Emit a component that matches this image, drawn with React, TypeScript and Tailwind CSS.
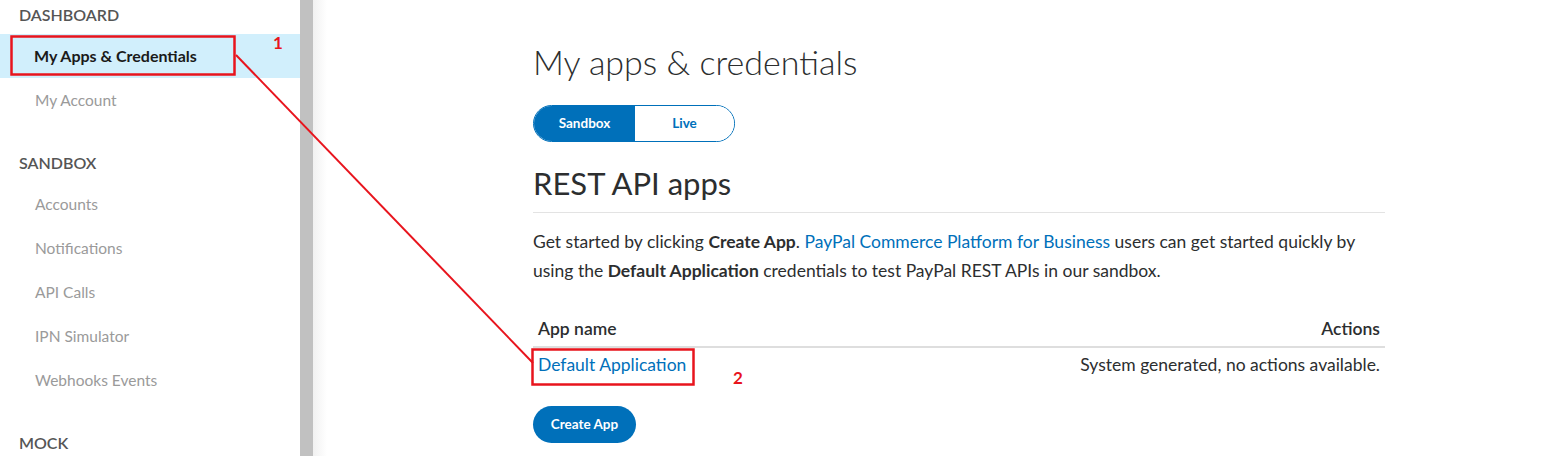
const sandboxLinks = ['Accounts', 'Notifications', 'API Calls', 'IPN Simulator', 'Webhooks Events'];

const Sidebar = () => {
  return (
    <aside className="relative flex h-full w-[300px] shrink-0 flex-col bg-white">
      <div className="pl-[19px] pt-[5px] text-[16px] font-semibold uppercase leading-[20px] text-[#555]">Dashboard</div>
      <div className="mt-[9px] flex h-[44px] items-center bg-[#d1effc] pl-[34px] text-[16px] font-bold text-[#1a1a1a]">
        My Apps &amp; Credentials
      </div>
      <div className="flex h-[45px] items-center pl-[35px] pt-[1px] text-[15.5px] text-[#9a9a9a]">My Account</div>
      <div className="mt-[30px] pl-[19px] text-[16px] font-semibold uppercase leading-[20px] text-[#555]">Sandbox</div>
      <div className="mt-[10px] flex flex-col">
        {sandboxLinks.map((link) => (
          <div key={link} className="flex h-[44px] items-center pl-[35px] text-[15.5px] text-[#9a9a9a]">
            {link}
          </div>
        ))}
      </div>
      <div className="mt-[30px] pl-[19px] text-[16px] font-semibold uppercase leading-[20px] text-[#555]">Mock</div>
    </aside>
  );
};

const App = () => {
  return (
    <div
      className="relative flex h-[456px] w-[1567px] overflow-hidden bg-white"
      style={{ fontFamily: 'Lato, "Open Sans", sans-serif' }}
    >
      <Sidebar />
      <div className="h-full w-[13px] shrink-0 bg-[#c1c1c1]" />
      <div className="h-full w-[14px] shrink-0 bg-gradient-to-r from-[#f1f1f1] to-white" />

      <main className="flex-1 pl-[206px]">
        <div className="w-[852px]">
          <h1 className="mt-[40px] text-[34px] font-light leading-[44px] text-[#2c2e2f]">My apps &amp; credentials</h1>

          <div className="mt-[21px] flex h-[37px] w-[202px] overflow-hidden rounded-full border border-[#0070ba] text-[13.5px] font-bold">
            <button className="w-[101px] bg-[#0070ba] text-white">Sandbox</button>
            <button className="flex-1 bg-white text-[#0070ba]">Live</button>
          </div>

          <h2 className="mt-[22px] text-[31px] font-normal leading-[38px] text-[#2c2e2f]">REST API apps</h2>
          <div className="mt-[10px] border-t border-[#e3e3e3]" />

          <p className="mt-[14px] text-[17.5px] leading-[29px] text-[#2c2e2f]">
            Get started by clicking <strong className="font-bold">Create App</strong>.{' '}
            <a className="text-[#0070ba]">PayPal Commerce Platform for Business</a> users can get started quickly by
            using the <strong className="font-bold">Default Application</strong> credentials to test PayPal REST APIs in
            our sandbox.
          </p>

          <div className="mt-[34px] flex items-end justify-between border-b-2 border-[#dedede] px-[5px] pb-[7px] text-[17.5px] font-semibold leading-[20px] text-[#2c2e2f]">
            <span>App name</span>
            <span>Actions</span>
          </div>
          <div className="flex items-center justify-between px-[5px] pt-[7px] text-[17.5px] leading-[20px]">
            <a className="text-[#0070ba]">Default Application</a>
            <span className="text-[#2c2e2f]">System generated, no actions available.</span>
          </div>

          <button className="mt-[31px] h-[37px] w-[103px] rounded-full bg-[#0070ba] text-[13.5px] font-bold text-white">
            Create App
          </button>
        </div>
      </main>

      <svg className="pointer-events-none absolute left-0 top-0" width="1567" height="456">
        <rect x="11.5" y="36.5" width="223" height="38" fill="none" stroke="#e8141d" strokeWidth="2.5" />
        <line x1="236" y1="55" x2="533" y2="363" stroke="#e8141d" strokeWidth="2" />
        <rect x="532.5" y="349.5" width="161" height="35" fill="none" stroke="#e8141d" strokeWidth="2.5" />
      </svg>
      <span className="absolute left-[273px] top-[33px] text-[17px] font-bold leading-[20px] text-[#e8141d]">1</span>
      <span className="absolute left-[733px] top-[368px] text-[17px] font-bold leading-[20px] text-[#e8141d]">2</span>
    </div>
  );
};

export default App;
